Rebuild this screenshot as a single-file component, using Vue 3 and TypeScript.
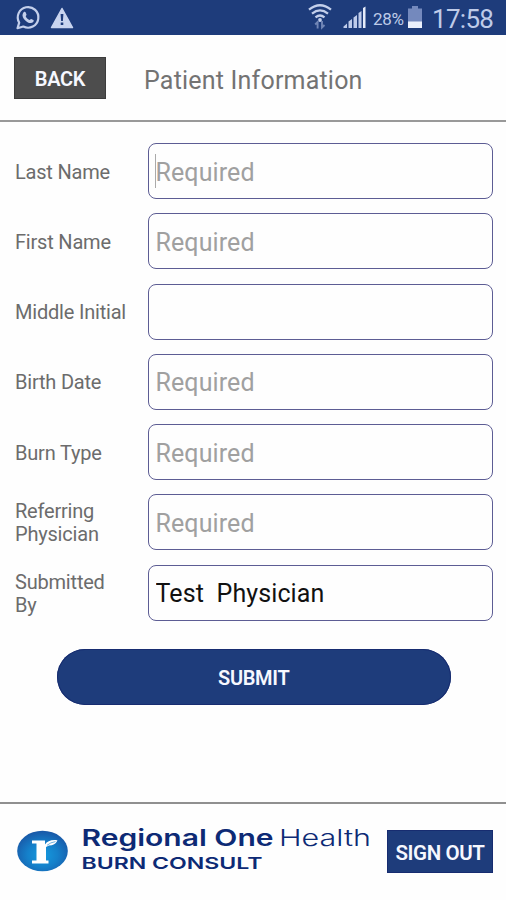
<script setup lang="ts">
import { reactive } from 'vue'

interface Field {
  id: string
  label: string
  value: string
  placeholder: string
  active?: boolean
}

const fields = reactive<Field[]>([
  { id: 'last', label: 'Last Name', value: '', placeholder: 'Required', active: true },
  { id: 'first', label: 'First Name', value: '', placeholder: 'Required' },
  { id: 'middle', label: 'Middle Initial', value: '', placeholder: '' },
  { id: 'birth', label: 'Birth Date', value: '', placeholder: 'Required' },
  { id: 'burn', label: 'Burn Type', value: '', placeholder: 'Required' },
  { id: 'referring', label: 'Referring Physician', value: '', placeholder: 'Required' },
  { id: 'submitted', label: 'Submitted By', value: 'Test  Physician', placeholder: '' },
])
</script>

<template>
  <div class="screen">
    <div class="status">
      <svg class="ic-chat" width="26" height="26" viewBox="0 0 26 26">
        <path d="M2.500 23.200 4.200 17.600A10.300 10.300 0 1 1 8.300 21.500Z" fill="none" stroke="#c3cfeb" stroke-width="2.200" stroke-linejoin="round" />
        <path d="M8.600 7.200c.8-.8 1.700-.6 2 .1l.9 2.100c.2.600-.9 1.500-.8 1.900.7 1.700 2 2.900 3.700 3.600.5.100 1.300-1.200 1.800-1l2.200 1.100c.5.300.3 1.400-.2 2-1.300 1.500-3.600 1.400-6.100-.1-2.500-1.500-4.500-4.200-4.600-6.300 0-1.400.5-2.700 1.100-3.400Z" fill="#c3cfeb" />
      </svg>
      <svg class="ic-warn" width="24" height="22" viewBox="0 0 24 22">
        <path d="M12 1.500 22.500 20.500h-21Z" fill="#c9d4ef" stroke="#c9d4ef" stroke-width="1.500" stroke-linejoin="round" />
        <path d="M10.600 7h2.800l-.5 7h-1.800ZM10.700 15.600h2.600v2.500h-2.600Z" fill="#1e3c7b" />
      </svg>
      <span class="grow"></span>
      <svg class="ic-wifi" width="26" height="28" viewBox="0 0 26 28">
        <g fill="none" stroke="#c3cfeb" stroke-width="2.300">
          <path d="M2 6.700Q13-2.300 24 6.700" />
          <path d="M5 10.600Q13 4.200 21 10.600" />
          <path d="M8.500 14.300Q13 10.700 17.500 14.300" />
        </g>
        <circle cx="13" cy="17" r="1.900" fill="#c3cfeb" />
        <g fill="none" stroke="#7186b6" stroke-width="1.900">
          <path d="M10.600 25.500V19L8.200 21.500" />
          <path d="M15 18V24.500L17.500 22" />
        </g>
      </svg>
      <svg class="ic-signal" width="24" height="22" viewBox="0 0 24 22">
        <path d="M.5 22v-1.500L4 17.500v4.500ZM5.500 22v-6.500L9 13v9ZM10.500 22V11.500L14 9v13ZM15.500 22V7L18.500 5v17Z" fill="#bfcceb" />
        <path d="M20 22V2L22.500 .5v21.500Z" fill="#e6ecfa" />
      </svg>
      <span class="percent">28%</span>
      <svg class="ic-batt" width="14" height="22" viewBox="0 0 14 22">
        <path d="M4 0h6v2.500h4V16H0V2.500h4Z" fill="#7489bd" />
        <path d="M0 15.500h14V22H0Z" fill="#eaf0fc" />
      </svg>
      <span class="clock">17:58</span>
    </div>

    <header class="head">
      <button class="back" type="button">BACK</button>
      <h1>Patient Information</h1>
    </header>

    <form class="form" @submit.prevent>
      <div v-for="f in fields" :key="f.id" class="row">
        <label :for="f.id">{{ f.label }}</label>
        <div class="box" :class="{ active: f.active }">
          <input :id="f.id" v-model="f.value" type="text" :placeholder="f.placeholder" />
        </div>
      </div>
      <button class="submit" type="submit">SUBMIT</button>
    </form>

    <footer class="foot">
      <svg class="brand" width="360" height="60" viewBox="0 0 360 60">
        <defs>
          <radialGradient id="oval" cx=".5" cy=".6" r=".6">
            <stop offset="0" stop-color="#159bdf" />
            <stop offset=".5" stop-color="#1580ca" />
            <stop offset="1" stop-color="#1957a6" />
          </radialGradient>
        </defs>
        <ellipse cx="27.500" cy="31" rx="25.300" ry="20.300" fill="url(#oval)" />
        <path d="M17 20.500H30V24.500Q33 19.500 41 20L42.500 20.500Q40 25.500 34 25.500L31 27V40.500H33.500V43.500H17V40.500H21.500V23.500H17Z" fill="#fff" />
        <path d="M32 25.300Q35.500 22.300 40.500 21.600" fill="none" stroke="#4c9ed8" stroke-width=".8" />
        <g fill="#0d2a75">
          <text class="name bold" x="66.500" y="26.200" textLength="192" lengthAdjust="spacingAndGlyphs">Regional One</text>
          <text class="name light" x="264" y="26.200" textLength="92" lengthAdjust="spacingAndGlyphs">Health</text>
          <text class="sub" x="66.500" y="48.500" textLength="181" lengthAdjust="spacingAndGlyphs">BURN CONSULT</text>
        </g>
      </svg>
      <button class="signout" type="button">SIGN OUT</button>
    </footer>
  </div>
</template>

<style>
body {
  margin: 0;
  background: #fefefe;
}
</style>

<style scoped>
.screen {
  width: 506px;
  height: 900px;
  display: flex;
  flex-direction: column;
  overflow: hidden;
  background: #fefefe;
  font-family: Roboto, "Liberation Sans", sans-serif;
  color: #666;
}
button {
  font-family: inherit;
  border: 0;
  padding: 0;
  color: #f6f8ff;
}
.status {
  height: 35px;
  flex: none;
  display: flex;
  box-sizing: border-box;
  padding: 0 13px 0 15px;
  background: #1e3c7b;
  color: #bfcbe8;
}
.grow { flex: 1; }
.ic-chat { margin-top: 5px; }
.ic-warn { margin: 7px 0 0 9px; }
.ic-wifi { margin: 3px 10px 0 0; }
.ic-signal { margin: 6px 6px 0 0; }
.percent {
  width: 35px;
  font-size: 17px;
  line-height: 38px;
  letter-spacing: -0.3px;
}
.ic-batt { margin: 6px 10px 0 0; }
.clock {
  width: 61px;
  font-size: 26px;
  line-height: 38px;
  letter-spacing: -0.7px;
  white-space: nowrap;
}
.head {
  height: 85px;
  flex: none;
  display: flex;
  align-items: center;
  border-bottom: 2px solid #999;
  padding-left: 14px;
}
.back {
  width: 92px;
  height: 42px;
  background: #4d4d4d;
  box-shadow: inset 0 0 0 1px #3c3c3c;
  font-size: 20px;
  font-weight: 600;
  letter-spacing: -0.3px;
  padding-top: 2px;
}
h1 {
  margin: 5px 0 0 38px;
  font-size: 25px;
  font-weight: 400;
  letter-spacing: 0.2px;
  color: #737373;
}
.form {
  flex: 1;
  display: flex;
  flex-direction: column;
  gap: 13.3px;
  padding: 20.500px 13.500px 0 15px;
}
.row {
  display: flex;
  align-items: center;
  justify-content: space-between;
  height: 57px;
}
label {
  width: 113px;
  padding-top: 2px;
  font-size: 20px;
  line-height: 23px;
  letter-spacing: -0.2px;
  color: #6c6c6c;
}
.box {
  position: relative;
  width: 345px;
  height: 56px;
}
.box.active::before {
  content: "";
  position: absolute;
  left: 7px;
  top: 11px;
  width: 1px;
  height: 34px;
  background: #aaa;
}
input {
  width: 100%;
  height: 100%;
  box-sizing: border-box;
  border: 1.500px solid #5d5d94;
  border-radius: 8px;
  background: transparent;
  padding: 2px 6px 0 7px;
  font-family: inherit;
  font-size: 25px;
  letter-spacing: 0.1px;
  color: #111;
  outline: none;
}
input::placeholder {
  color: #a0a0a0;
  opacity: 1;
}
.submit {
  align-self: center;
  width: 394px;
  height: 56px;
  margin-top: 14px;
  border-radius: 28px;
  background: #1e3c7b;
  box-shadow: inset 0 0 0 1px #172c70;
  font-size: 20px;
  font-weight: 600;
  letter-spacing: -0.3px;
  padding-top: 2px;
}
.foot {
  height: 96px;
  flex: none;
  display: flex;
  border-top: 2px solid #909090;
  padding-left: 15px;
}
.brand { margin-top: 16px; }
.name { font-family: Inter, sans-serif; font-size: 22.500px; }
.bold { font-weight: 600; }
.light { font-weight: 300; }
.sub { font-family: Inter, sans-serif; font-size: 16.500px; font-weight: 600; }
.signout {
  width: 106px;
  height: 43px;
  margin: 26px 0 0 12px;
  background: #1e3c7b;
  box-shadow: inset 0 0 0 1px #172c70;
  font-size: 20.500px;
  font-weight: 600;
  letter-spacing: -0.4px;
  white-space: nowrap;
  padding-top: 2px;
}
</style>
